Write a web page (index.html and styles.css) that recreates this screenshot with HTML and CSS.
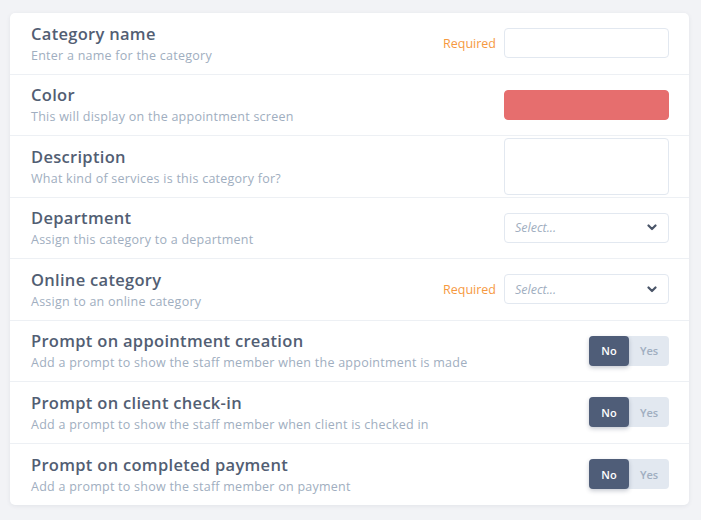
FILE: index.html
```html
<!DOCTYPE html>
<html lang="en">
<head>
  <meta charset="UTF-8">
  <meta name="viewport" content="width=device-width, initial-scale=1.0">
  <title>Category</title>
  <link rel="stylesheet" href="styles.css">
</head>
<body>
  <div class="card">
    <div class="row">
      <div class="info">
        <div class="title">Category name</div>
        <div class="sub">Enter a name for the category</div>
      </div>
      <div class="field">
        <span class="req">Required</span>
        <input class="box" type="text">
      </div>
    </div>

    <div class="row">
      <div class="info">
        <div class="title">Color</div>
        <div class="sub">This will display on the appointment screen</div>
      </div>
      <div class="field">
        <div class="box swatch"></div>
      </div>
    </div>

    <div class="row">
      <div class="info">
        <div class="title">Description</div>
        <div class="sub">What kind of services is this category for?</div>
      </div>
      <div class="field">
        <textarea class="box area"></textarea>
      </div>
    </div>

    <div class="row">
      <div class="info">
        <div class="title">Department</div>
        <div class="sub">Assign this category to a department</div>
      </div>
      <div class="field">
        <div class="box select">
          <span>Select...</span>
          <svg width="10" height="7" viewBox="0 0 10 7"><path d="M1.5 1.5 L5 5 L8.5 1.5" fill="none" stroke="#4a5568" stroke-width="2.2" stroke-linecap="round" stroke-linejoin="round"/></svg>
        </div>
      </div>
    </div>

    <div class="row">
      <div class="info">
        <div class="title">Online category</div>
        <div class="sub">Assign to an online category</div>
      </div>
      <div class="field">
        <span class="req">Required</span>
        <div class="box select">
          <span>Select...</span>
          <svg width="10" height="7" viewBox="0 0 10 7"><path d="M1.5 1.5 L5 5 L8.5 1.5" fill="none" stroke="#4a5568" stroke-width="2.2" stroke-linecap="round" stroke-linejoin="round"/></svg>
        </div>
      </div>
    </div>

    <div class="row">
      <div class="info">
        <div class="title">Prompt on appointment creation</div>
        <div class="sub">Add a prompt to show the staff member when the appointment is made</div>
      </div>
      <div class="field">
        <div class="toggle"><span class="on">No</span><span>Yes</span></div>
      </div>
    </div>

    <div class="row">
      <div class="info">
        <div class="title">Prompt on client check-in</div>
        <div class="sub">Add a prompt to show the staff member when client is checked in</div>
      </div>
      <div class="field">
        <div class="toggle"><span class="on">No</span><span>Yes</span></div>
      </div>
    </div>

    <div class="row">
      <div class="info">
        <div class="title">Prompt on completed payment</div>
        <div class="sub">Add a prompt to show the staff member on payment</div>
      </div>
      <div class="field">
        <div class="toggle"><span class="on">No</span><span>Yes</span></div>
      </div>
    </div>
  </div>
</body>
</html>
```

FILE: styles.css
```css
*{
  box-sizing: border-box;
  font-family: "Open Sans", sans-serif;
}
body{
  margin: 0;
  padding: 13px 12px 15px 10px;
  background-color: #f2f3f6;
}
.card{
  background: #fff;
  border-radius: 5px;
  box-shadow: 0 1px 4px rgba(40, 50, 80, 0.08);
}
.row{
  display: flex;
  align-items: center;
  justify-content: space-between;
  height: 61.5px;
  padding: 0 20px 0 21px;
  border-bottom: 1px solid #edf0f4;
}
.row:last-child{
  border-bottom: none;
}
.info{
  padding-top: 2px;
}
.title{
  font-size: 16.5px;
  font-weight: 600;
  letter-spacing: 0.3px;
  color: #525e73;
  line-height: 20px;
}
.sub{
  font-size: 12.5px;
  letter-spacing: 0.25px;
  color: #a0aec0;
  line-height: 18px;
  margin-top: 3px;
}
.field{
  display: flex;
  align-items: center;
  gap: 8px;
}
.req{
  font-size: 12.5px;
  color: #f6993f;
}
.box{
  width: 165px;
  height: 30px;
  border: 1px solid #e2e8f0;
  border-radius: 4px;
  background: #fff;
  outline: none;
}
.swatch{
  background: #e66e6e;
  border-color: #e66e6e;
}
.area{
  height: 57px;
  resize: none;
}
.select{
  display: flex;
  align-items: center;
  justify-content: space-between;
  padding: 0 11px 0 10px;
  font-size: 12.5px;
  font-style: italic;
  color: #a0aec0;
}
.toggle{
  display: flex;
  width: 80px;
  height: 30px;
  border-radius: 4px;
  background: #e2e8f0;
  font-size: 11px;
  font-weight: 600;
}
.toggle span{
  flex: 1;
  display: flex;
  align-items: center;
  justify-content: center;
  color: #a0aec0;
}
.toggle .on{
  background: #4f5d78;
  color: #fff;
  border-radius: 4px;
  box-shadow: 0 2px 4px rgba(40, 50, 80, 0.25);
}
```
